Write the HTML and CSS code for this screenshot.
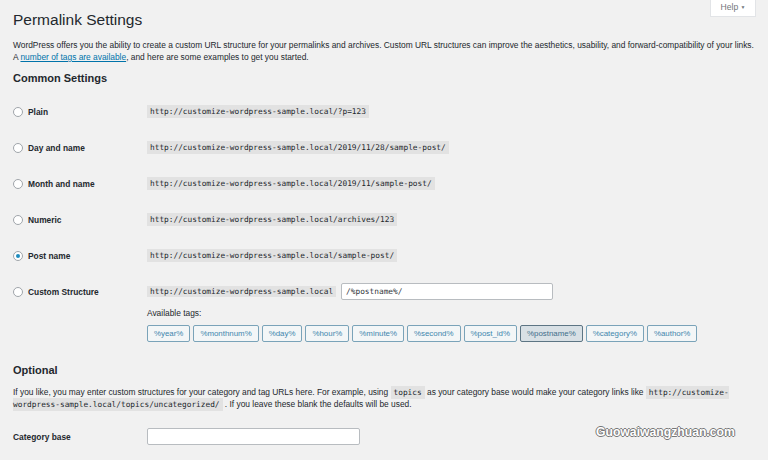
FILE: index.html
```html
<!DOCTYPE html>
<html lang="en">
<head>
  <meta charset="UTF-8">
  <title>Permalink Settings</title>
  <link rel="stylesheet" href="styles.css">
</head>
<body>
  <div class="help-tab">Help <span class="caret">&#9660;</span></div>

  <div class="wrap">
    <h1>Permalink Settings</h1>

    <p class="intro">WordPress offers you the ability to create a custom URL structure for your permalinks and archives. Custom URL structures can improve the aesthetics, usability, and forward-compatibility of your links.<br>
    A <a href="#">number of tags are available</a>, and here are some examples to get you started.</p>

    <h2>Common Settings</h2>

    <div class="settings">
      <div class="row">
        <label class="choice"><span class="radio"></span>Plain</label>
        <div class="value"><code>http://customize-wordpress-sample.local/?p=123</code></div>
      </div>
      <div class="row">
        <label class="choice"><span class="radio"></span>Day and name</label>
        <div class="value"><code>http://customize-wordpress-sample.local/2019/11/28/sample-post/</code></div>
      </div>
      <div class="row">
        <label class="choice"><span class="radio"></span>Month and name</label>
        <div class="value"><code>http://customize-wordpress-sample.local/2019/11/sample-post/</code></div>
      </div>
      <div class="row">
        <label class="choice"><span class="radio"></span>Numeric</label>
        <div class="value"><code>http://customize-wordpress-sample.local/archives/123</code></div>
      </div>
      <div class="row">
        <label class="choice"><span class="radio checked"></span>Post name</label>
        <div class="value"><code>http://customize-wordpress-sample.local/sample-post/</code></div>
      </div>
      <div class="row last">
        <label class="choice"><span class="radio"></span>Custom Structure</label>
        <div class="value">
          <div class="custom-line">
            <code>http://customize-wordpress-sample.local</code>
            <input type="text" class="structure" value="/%postname%/">
          </div>
          <div class="tags-title">Available tags:</div>
          <div class="tags">
            <button>%year%</button>
            <button>%monthnum%</button>
            <button>%day%</button>
            <button>%hour%</button>
            <button>%minute%</button>
            <button>%second%</button>
            <button>%post_id%</button>
            <button class="active">%postname%</button>
            <button>%category%</button>
            <button>%author%</button>
          </div>
        </div>
      </div>
    </div>

    <h2 class="optional">Optional</h2>
    <p class="note">If you like, you may enter custom structures for your category and tag URLs here. For example, using <code>topics</code> as your category base would make your category links like <code>http://customize-<br>wordpress-sample.local/topics/uncategorized/</code> . If you leave these blank the defaults will be used.</p>

    <div class="row base-row">
      <label class="field-label">Category base</label>
      <div class="value"><input type="text" class="base"></div>
    </div>
  </div>

  <div class="watermark">Guowaiwangzhuan.com</div>
</body>
</html>
```

FILE: styles.css
```css
body { margin: 0; background: #f1f1f1; color: #23282d; font-family: "Liberation Sans", Arial, sans-serif; font-size: 8.4px; }
.wrap { padding: 10px 13px 0; }
h1 { margin: 0; font-size: 15.5px; font-weight: 400; line-height: 20px; }
h2 { margin: 8px 0 0; font-size: 11px; font-weight: 700; line-height: 14px; }
p { margin: 0; line-height: 12px; }
.intro { margin-top: 9px; }
a { color: #0073aa; }
code { font-family: "DejaVu Sans Mono", monospace; font-size: 7.8px; line-height: 1; background: #e2e2e2; padding: 2px 3px; }

.help-tab { position: absolute; top: 0; right: 12px; width: 46px; height: 17px; background: #fff; border: 1px solid #e2e4e7; border-top: none; box-sizing: border-box; color: #72777c; font-size: 8.6px; line-height: 15px; text-align: center; }
.help-tab .caret { font-size: 5px; vertical-align: 1px; }

.settings { margin-top: 8px; }
.row { display: flex; padding: 10px 0 9px; }
.row.last { padding-bottom: 0; }
.choice, .field-label { width: 134px; flex-shrink: 0; display: flex; align-items: center; height: 17px; font-weight: 700; }
.radio { width: 10px; height: 10px; border: 1px solid #a0a5aa; border-radius: 50%; background: #fff; box-sizing: border-box; margin-right: 5px; display: flex; align-items: center; justify-content: center; }
.radio.checked::after { content: ""; width: 4px; height: 4px; border-radius: 50%; background: #1e8cbe; }
.value { line-height: 17px; }

.custom-line { display: flex; align-items: center; gap: 5px; height: 17px; }
input { font-family: "DejaVu Sans Mono", monospace; font-size: 7.8px; background: #fff; border: 1px solid #b8bcc0; border-radius: 2px; box-sizing: border-box; height: 17px; padding: 0 4px; color: #32373c; }
.structure { width: 212px; }
.tags-title { margin-top: 7px; line-height: 12px; }
.tags { display: flex; gap: 3px; margin-top: 6px; }
.tags button { height: 17px; padding: 0 6px; font-family: inherit; font-size: 7.9px; color: #3f86ad; background: #f3f6f7; border: 1px solid #7aa3b9; border-radius: 2px; }
.tags button.active { background: #d8e0e5; border-color: #5d7584; color: #3f6f8a; }

.optional { margin-top: 21px; }
.note { margin-top: 9px; }
.base-row { padding: 0; margin-top: 18px; }
.base { width: 213px; }

.watermark { position: absolute; left: 596px; top: 425px; color: #fff; font-family: "Liberation Sans", Arial, sans-serif; font-weight: 700; font-size: 12.2px; text-shadow: 1px 0 #777, -1px 0 #777, 0 1px #777, 0 -1px #777; }
```
